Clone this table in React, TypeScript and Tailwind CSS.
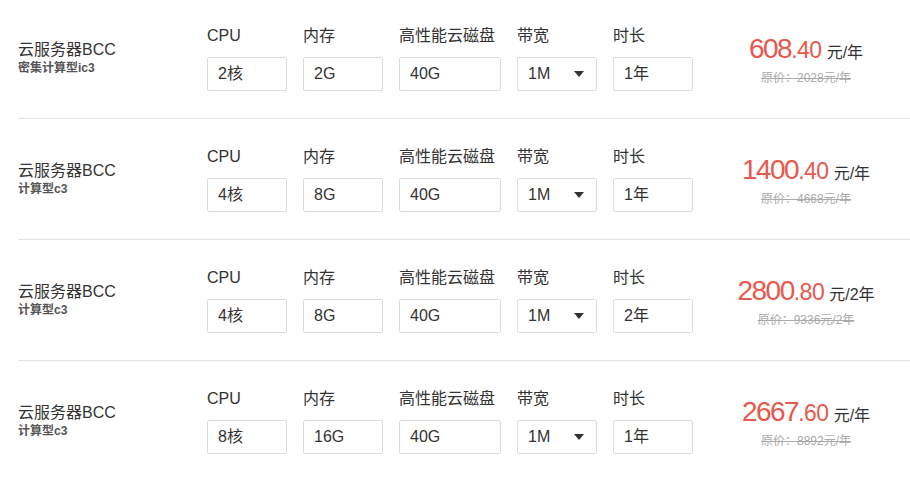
type Plan = {
    name: string;
    type: string;
    cpu: string;
    mem: string;
    disk: string;
    bw: string;
    term: string;
    price: string;
    decimal: string;
    unit: string;
    original: string;
};

const plans: Plan[] = [
    { name: "云服务器BCC", type: "密集计算型ic3", cpu: "2核", mem: "2G", disk: "40G", bw: "1M", term: "1年", price: "608", decimal: ".40", unit: "元/年", original: "原价：2028元/年" },
    { name: "云服务器BCC", type: "计算型c3", cpu: "4核", mem: "8G", disk: "40G", bw: "1M", term: "1年", price: "1400", decimal: ".40", unit: "元/年", original: "原价：4668元/年" },
    { name: "云服务器BCC", type: "计算型c3", cpu: "4核", mem: "8G", disk: "40G", bw: "1M", term: "2年", price: "2800", decimal: ".80", unit: "元/2年", original: "原价：9336元/2年" },
    { name: "云服务器BCC", type: "计算型c3", cpu: "8核", mem: "16G", disk: "40G", bw: "1M", term: "1年", price: "2667", decimal: ".60", unit: "元/年", original: "原价：8892元/年" },
];

function Field({ label, value, width, select }: { label: string; value: string; width: string; select?: boolean }) {
    return (
        <div className={`flex flex-col ${width}`}>
            <div className="h-[22px] text-[16px] leading-[22px] text-[#333]">{label}</div>
            <div className="mt-[10px] h-[34px] flex items-center justify-between px-[10px] border border-[#dcdcdc] rounded-[2px] bg-white text-[16px] text-[#333]">
                <span>{value}</span>
                {select && (
                    <svg width="10" height="6" viewBox="0 0 10 6" className="mr-[2px]">
                        <path d="M0 0h10L5 6z" fill="#333" />
                    </svg>
                )}
            </div>
        </div>
    );
}

export default function App() {
    return (
        <div
            className="w-[910px] h-[477px] overflow-hidden bg-white"
            style={{ fontFamily: '"Liberation Sans", "Noto Sans CJK SC", sans-serif' }}
        >
            <div className="mt-[-2px] ml-[18px]">
                {plans.map((p, i) => (
                    <div key={i} className="h-[121px] border-b border-[#e2e2e2] flex">
                        <div className="w-[189px] pt-[41px]">
                            <div className="text-[16px] leading-[22px] text-[#333]">{p.name}</div>
                            <div className="text-[12px] leading-[14px] font-bold text-[#555]">{p.type}</div>
                        </div>
                        <div className="flex gap-[16px] pt-[27px]">
                            <Field label="CPU" value={p.cpu} width="w-[80px]" />
                            <Field label="内存" value={p.mem} width="w-[80px]" />
                            <Field label="高性能云磁盘" value={p.disk} width="w-[102px]" />
                            <Field label="带宽" value={p.bw} width="w-[80px]" select />
                            <Field label="时长" value={p.term} width="w-[80px]" />
                        </div>
                        <div className="flex-1 ml-[9px] flex flex-col items-center pt-[35px]">
                            <div className="flex items-baseline h-[32px]">
                                <span className="text-[28px] leading-[32px] tracking-[-1.5px] text-[#e9584c]">{p.price}</span>
                                <span className="text-[23px] leading-[32px] tracking-[-0.5px] text-[#e9584c]">{p.decimal}</span>
                                <span className="ml-[5px] text-[16px] text-[#333]">{p.unit}</span>
                            </div>
                            <div className="mt-[5px] text-[12px] leading-[16px] text-[#aaa] line-through">{p.original}</div>
                        </div>
                    </div>
                ))}
            </div>
        </div>
    );
}
